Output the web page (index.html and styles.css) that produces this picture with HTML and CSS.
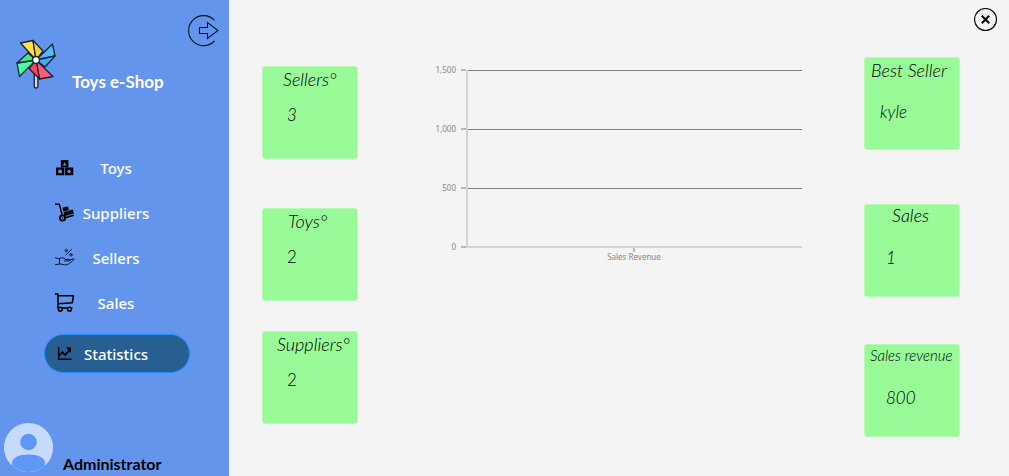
FILE: index.html
```html
<!DOCTYPE html>
<html lang="en">
<head>
<meta charset="utf-8">
<title>Toys e-Shop</title>
<link rel="stylesheet" href="styles.css">
</head>
<body>
<div class="app">
  <aside class="sidebar">
    <header class="brand">
      <svg class="brand-logo" viewBox="0 0 40 50" width="40" height="50" aria-hidden="true">
        <g stroke="#1c2233" stroke-width="1.3" stroke-linejoin="round">
          <rect x="18.3" y="23" width="3.6" height="26" rx="1.5" fill="#d5dbe8"/>
          <path d="M20 21 4.500 4 17 1.500Z" fill="#ffe047"/>
          <path d="M20 21 17 1.500 27 12Z" fill="#f7d136"/>
          <path d="M20 21 36.500 5 39 17Z" fill="#4fbcff"/>
          <path d="M20 21 39 17 29 28Z" fill="#3fadf2"/>
          <path d="M20 21 37 37.500 23.500 40Z" fill="#ff5a73"/>
          <path d="M20 21 23.500 40 13 29.500Z" fill="#f54562"/>
          <path d="M20 21 3.500 37.500 1 24Z" fill="#4dff9b"/>
          <path d="M20 21 1 24 12 14Z" fill="#3dec8c"/>
          <circle cx="20" cy="21" r="3.400" fill="#fff"/>
        </g>
      </svg>
      <h1 class="brand-name">Toys e-Shop</h1>
      <button class="icon-button logout" type="button" aria-label="Log out">
        <svg viewBox="0 0 31 32" width="31" height="32" fill="none" stroke="#071226" stroke-width="1.100" aria-hidden="true">
          <path d="M26.500 5.300A15 15 0 1 0 26.500 26"/>
          <path d="M11.500 12.500H19.500V7.500L30 15.500 19.500 23.500V18.500H11.500Z"/>
        </svg>
      </button>
    </header>

    <nav class="nav">
      <button class="nav-item" type="button">
        <svg viewBox="0 0 20 20" width="20" height="20" aria-hidden="true">
          <path fill="#000" fill-rule="evenodd" d="M5.800 2h7.600v7.300H5.800ZM9.600 4.200 7.900 7.500h3.400ZM1 9.600h8.300v7.700H1ZM10 9.600h8.300v7.700H10ZM5.100 11.600a1.900 1.900 0 1 0 .01 0ZM14.100 11.400l-2.100 2.100 2.100 2.100 2.100-2.100Z"/>
        </svg>
        <span>Toys</span>
      </button>
      <button class="nav-item" type="button">
        <svg viewBox="0 0 20 20" width="20" height="20" aria-hidden="true">
          <path d="M0 1.300H4.300L7.200 12" fill="none" stroke="#000" stroke-width="1.500"/>
          <path d="M10.500 14.800 18.700 12.200" stroke="#000" stroke-width="1.500"/>
          <path d="m7.400 4.700 5.500-1.500 1.100 3.700-5.600 1.600ZM8.500 9.200 17.700 6.600 18.900 10.500 9.700 13.200Z"/>
          <path d="m11.800 3.500.6 3.400M13.300 8l.7 3.500" stroke="#2c4777" stroke-width=".5"/>
          <circle cx="7.500" cy="15" r="2.700" fill="#6495ed" stroke="#000" stroke-width="1.800"/>
          <circle cx="7.500" cy="15" r=".8"/>
        </svg>
        <span>Suppliers</span>
      </button>
      <button class="nav-item" type="button">
        <svg viewBox="0 0 20 20" width="20" height="20" fill="none" stroke="#081831" stroke-width="1" stroke-linecap="round" stroke-linejoin="round" aria-hidden="true">
          <path d="M.5 9.700 4.500 11v5L.5 16.700M4.500 10.300 8 9.800l2.800 1.700 3.200-.2c1 0 1 1.500 0 1.600H9.500M14.500 12.300 18 10.800c1-.3 1.500.6.7 1.200l-5 3.900c-2.500 1.700-5.500.6-9.200-.1M11 6.800l5.500-5.300"/>
          <circle cx="11.300" cy="2.500" r="1.200"/>
          <circle cx="15.900" cy="6.800" r="1.200"/>
        </svg>
        <span>Sellers</span>
      </button>
      <button class="nav-item" type="button">
        <svg viewBox="0 0 20 20" width="20" height="20" fill="none" stroke="#000" stroke-width="1.600" stroke-linejoin="round" aria-hidden="true">
          <path d="M0 1h3v14h14.500M3 2.700h15.500l-1.200 7L3 10.800"/>
          <circle cx="5.300" cy="16.200" r="1.900" fill="#6495ed"/>
          <circle cx="14.500" cy="16.200" r="1.900" fill="#6495ed"/>
        </svg>
        <span>Sales</span>
      </button>
      <button class="nav-item nav-item--active" type="button" aria-current="page">
        <svg viewBox="0 0 20 20" width="20" height="20" fill="none" stroke="#000" aria-hidden="true">
          <path d="M3.600 3v12.300H16.500" stroke-width="1.400"/>
          <path d="m4 11.700 3.500-3.500 2.700 2.700 4.300-4.600" stroke-width="1.800"/>
          <path d="M10.800 3.500H16v5.200Z" fill="#000" stroke="none"/>
        </svg>
        <span>Statistics</span>
      </button>
    </nav>

    <footer class="user">
      <svg viewBox="0 0 50 50" width="50" height="50" aria-hidden="true">
        <circle cx="24.500" cy="24.500" r="24.500" fill="#c6dbfc"/>
        <circle cx="24.500" cy="19" r="8.300" fill="#5e97f6"/>
        <path d="M8 42.600V40c0-5.500 7-8.500 16.500-8.500S41 34.500 41 40v2.600A24.500 24.500 0 0 1 8 42.600Z" fill="#5e97f6"/>
      </svg>
      <span class="user-name">Administrator</span>
    </footer>
  </aside>

  <main class="main">
    <div class="toolbar">
      <button class="icon-button" type="button" aria-label="Close">
        <svg viewBox="0 0 24 24" width="24" height="24" fill="none" stroke="#111" aria-hidden="true">
          <circle cx="11.500" cy="11.500" r="11" stroke-width="1.200"/>
          <path d="m7.800 7.800 7.400 7.400m0-7.400-7.400 7.400" stroke-width="2.200"/>
        </svg>
      </button>
    </div>

    <div class="dashboard">
      <section class="stack stack--counts">
        <article class="card card--sellers"><h2>Sellers°</h2><p>3</p></article>
        <article class="card card--toys"><h2>Toys°</h2><p class="upright">2</p></article>
        <article class="card card--suppliers"><h2>Suppliers°</h2><p class="upright">2</p></article>
      </section>

      <figure class="chart">
        <div class="chart-labels"><span>1,500</span><span>1,000</span><span>500</span><span>0</span></div>
        <div class="chart-ticks"><i></i><i></i><i></i><i></i></div>
        <div class="chart-plot"><i></i><i></i><i></i></div>
        <figcaption class="chart-category">Sales Revenue</figcaption>
      </figure>

      <section class="stack stack--sales">
        <article class="card card--best"><h2>Best Seller</h2><p>kyle</p></article>
        <article class="card card--sales"><h2>Sales</h2><p>1</p></article>
        <article class="card card--revenue"><h2>Sales revenue</h2><p>800</p></article>
      </section>
    </div>
  </main>
</div>
</body>
</html>
```
FILE: styles.css
```css
* {
  box-sizing: border-box;
}

body,
h1,
h2,
p,
figure {
  margin: 0;
}

body {
  background: #f4f4f4;
  color: #000;
  font-family: Lato, "Liberation Sans", sans-serif;
}

button {
  padding: 0;
  border: 0;
  background: none;
  font: inherit;
  cursor: pointer;
}

svg {
  display: block;
}

.app {
  display: grid;
  grid-template-columns: 229px 1fr;
  min-height: 100vh;
}

/* Sidebar */

.sidebar {
  display: flex;
  flex-direction: column;
  background: #6495ed;
}

.brand {
  display: flex;
  align-items: flex-end;
  gap: 16px;
  padding: 15px 10px 0 16px;
}

.brand-logo {
  margin-top: 24px;
}

.brand-name {
  color: #fff;
  font-size: 17px;
  font-weight: 700;
  line-height: 14px;
  white-space: nowrap;
}

.logout {
  align-self: flex-start;
  margin-left: auto;
}

.nav {
  display: flex;
  flex-direction: column;
  padding: 56px 39px 0 44px;
}

.nav-item {
  display: grid;
  grid-template-columns: 20px 1fr 22px;
  align-items: center;
  height: 45px;
  padding: 0 11px;
  color: #fff;
  font-family: "Noto Sans", sans-serif;
  font-size: 15px;
  font-weight: 500;
  white-space: nowrap;
}

.nav-item span {
  justify-self: center;
}

.nav-item--active {
  height: 39px;
  margin-top: 9px;
  padding: 0 10px;
  border: 1px solid #1e90ff;
  border-radius: 20px;
  background: #275f90;
}

.user {
  display: flex;
  align-items: flex-end;
  gap: 9px;
  margin-top: auto;
  padding: 0 4px 3px;
}

.user-name {
  font-size: 16px;
  font-weight: 700;
  line-height: 18px;
}

/* Main area */

.toolbar {
  display: flex;
  justify-content: flex-end;
  padding: 8px 11px 0 0;
}

.dashboard {
  display: grid;
  grid-template-columns: 96px 1fr 96px;
  align-items: start;
  padding: 0 49px 0 33px;
}

.stack {
  display: flex;
  flex-direction: column;
}

.stack--counts {
  padding-top: 34px;
}

.stack--sales {
  padding-top: 25px;
}

.card {
  height: 93px;
  border: 1px solid #b5fab5;
  border-radius: 3px;
  background: #98fb98;
  font-size: 17px;
  font-style: italic;
  font-weight: 300;
  line-height: 20px;
  white-space: nowrap;
}

.card h2 {
  padding-top: 2px;
  font-size: 18px;
  font-weight: 300;
}

.card p {
  padding: 16px 0 0 24px;
}

.card .upright {
  font-style: normal;
}

.card--sellers h2 {
  padding-left: 20px;
}

.card--toys {
  margin-top: 49px;
}

.card--toys h2 {
  padding-left: 25px;
}

.card--suppliers {
  margin-top: 30px;
}

.card--suppliers h2 {
  padding-left: 14px;
}

.card--best h2 {
  padding-left: 6px;
}

.card--best p {
  padding: 22px 0 0 15px;
}

.card--sales {
  margin-top: 54px;
}

.card--sales h2 {
  padding: 0 0 0 27px;
}

.card--sales p {
  padding: 23px 0 0 21px;
}

.card--revenue {
  margin-top: 47px;
}

.card--revenue h2 {
  padding: 0 0 0 5px;
  font-size: 15px;
}

.card--revenue p {
  padding: 23px 0 0 21px;
}

/* Chart */

.chart {
  display: grid;
  grid-template-columns: 22px 5px 1fr;
  padding: 32px 62px 0 76px;
  color: #888;
  font-family: "Noto Sans", sans-serif;
  font-size: 8px;
  line-height: 12px;
}

.chart-labels {
  display: flex;
  flex-direction: column;
  gap: 47px;
  margin-bottom: -5px;
  text-align: right;
}

.chart-ticks {
  display: flex;
  flex-direction: column;
  gap: 57px;
  margin-left: 5px;
  padding-top: 5px;
}

.chart-ticks i {
  width: 5px;
  height: 2px;
  background: #b8b8b8;
}

.chart-plot {
  display: flex;
  flex-direction: column;
  height: 178px;
  margin: 6px 0 0 5px;
  border: solid #d3d3d3;
  border-width: 0 0 2px 2px;
}

.chart-plot i {
  flex: 0 0 59px;
  border-top: 1px solid #808080;
}

.chart-category {
  display: flex;
  flex-direction: column;
  grid-column: 3;
  align-items: center;
  padding-left: 5px;
  line-height: 10px;
}

.chart-category::before {
  width: 2px;
  height: 4px;
  background: #b8b8b8;
  content: "";
}
```
